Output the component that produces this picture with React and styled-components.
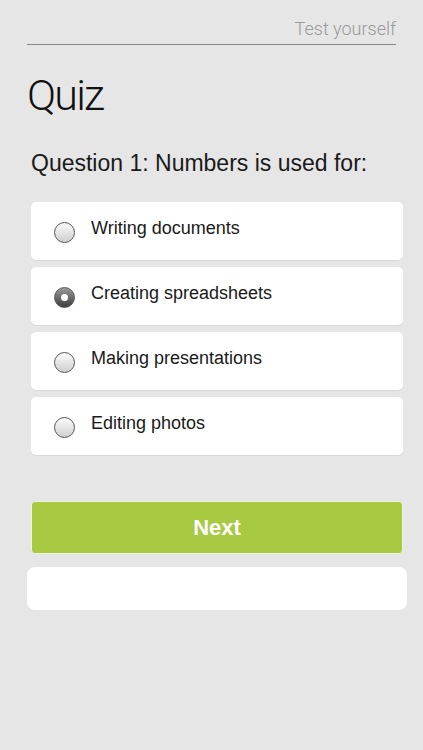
import React from "react";
import styled, { createGlobalStyle } from "styled-components";

const GlobalStyle = createGlobalStyle`
  html, body {
    margin: 0;
    padding: 0;
    background: #e6e6e6;
  }
  body {
    font-family: "Liberation Sans", Arial, sans-serif;
  }
`;

const Page = styled.div`
  width: 423px;
  min-height: 750px;
  background: #e6e6e6;
  box-sizing: border-box;
  padding: 18px 16px 0 27px;
  display: flex;
  flex-direction: column;
`;

const Header = styled.div`
  width: 369px;
  border-bottom: 1.5px solid #8c8888;
  text-align: right;
  font-family: Roboto, "Liberation Sans", sans-serif;
  font-weight: 300;
  font-size: 18px;
  color: #999;
  padding-bottom: 5px;
`;

const Title = styled.h1`
  margin: 24px 0 0 0;
  font-family: Roboto, "Liberation Sans", sans-serif;
  font-weight: 300;
  font-size: 43px;
  line-height: 52px;
  color: #111;
  letter-spacing: -1.8px;
`;

const Question = styled.div`
  margin: 29px 0 0 4px;
  font-size: 23px;
  line-height: 26px;
  color: #1a1a1a;
`;

const Options = styled.div`
  margin: 26px 0 0 4px;
  width: 372px;
  display: flex;
  flex-direction: column;
  gap: 7px;
`;

const Option = styled.div`
  height: 58px;
  background: #fff;
  border-radius: 5px;
  box-shadow: 0 1px 0 #d8d8d8;
  display: flex;
  align-items: center;
  padding-left: 23px;
  gap: 16px;
  box-sizing: border-box;
`;

const Radio = styled.span`
  width: 21px;
  height: 21px;
  border-radius: 50%;
  box-sizing: border-box;
  border: 1.5px solid #555;
  margin-top: 3px;
  background: ${(p) =>
    p.$checked
      ? "linear-gradient(#9a9a9a, #3d3d3d)"
      : "linear-gradient(#fbfbfb, #cfcfcf)"};
  display: flex;
  align-items: center;
  justify-content: center;
  flex-shrink: 0;
  &::after {
    content: "";
    display: ${(p) => (p.$checked ? "block" : "none")};
    width: 7px;
    height: 7px;
    border-radius: 50%;
    background: #fff;
  }
`;

const Label = styled.span`
  font-size: 18px;
  color: #1a1a1a;
  margin-bottom: 6px;
`;

const NextButton = styled.button`
  margin: 46px 0 0 4px;
  width: 372px;
  height: 53px;
  background: #a8c942;
  border: 1px solid #eef4d8;
  border-radius: 4px;
  color: #fff;
  font-family: "Liberation Sans", Arial, sans-serif;
  font-weight: bold;
  font-size: 22px;
  cursor: pointer;
`;

const Feedback = styled.div`
  margin-top: 13px;
  width: 380px;
  height: 43px;
  background: #fff;
  border-radius: 8px;
`;

const options = [
  { label: "Writing documents" },
  { label: "Creating spreadsheets", checked: true },
  { label: "Making presentations" },
  { label: "Editing photos" },
];

const App = () => (
  <>
    <GlobalStyle />
    <Page>
      <Header>Test yourself</Header>
      <Title>Quiz</Title>
      <Question>Question 1: Numbers is used for:</Question>
      <Options>
        {options.map((o, i) => (
          <Option key={i}>
            <Radio $checked={o.checked} />
            <Label>{o.label}</Label>
          </Option>
        ))}
      </Options>
      <NextButton>Next</NextButton>
      <Feedback />
    </Page>
  </>
);

export default App;
